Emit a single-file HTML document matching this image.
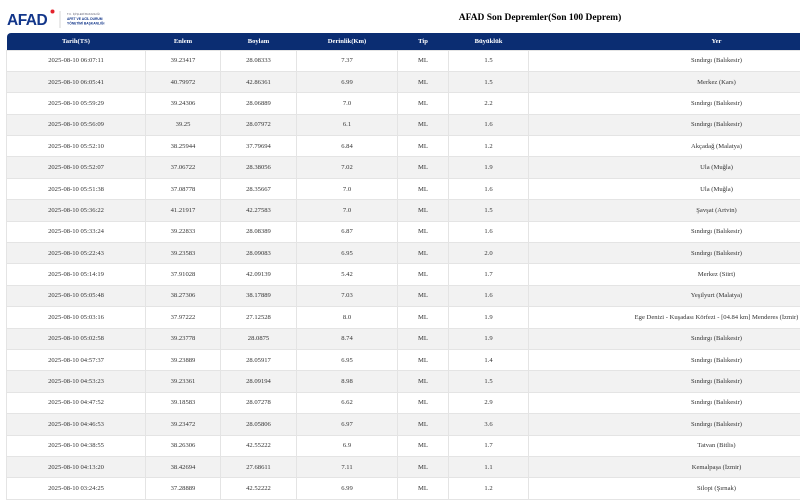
<!DOCTYPE html>
<html><head><meta charset="utf-8"><style>
html,body{margin:0;padding:0;width:800px;height:498px;overflow:hidden;background:#fff;font-family:"Liberation Serif",serif;}
.logo{position:absolute;left:7px;top:8px;}
.title{position:absolute;left:440px;width:200px;top:13px;text-align:center;font-weight:bold;font-size:9.5px;color:#000;}
table{position:absolute;left:6px;top:33px;width:898px;border-collapse:collapse;table-layout:fixed;font-size:6.6px;color:#333;}
th{background:#0b2d72;color:#fff;font-weight:bold;height:16.5px;padding:0;text-align:center;}
thead tr th:first-child{border-top-left-radius:4px;}
td{height:21.4px;padding:0;text-align:center;border:1px solid #e4e4e4;box-sizing:border-box;}
tbody tr:nth-child(even){background:#f2f2f2;}
</style></head><body>
<div class="logo">
<svg width="110" height="22" viewBox="0 0 110 22">
<text x="0" y="17" font-family="Liberation Sans" font-weight="bold" font-size="15.5" fill="#12368a" letter-spacing="-0.5">AFAD</text>
<circle cx="45.5" cy="3.5" r="2" fill="#e3222c"/>
<line x1="53" y1="3" x2="53" y2="20" stroke="#bbb" stroke-width="0.6"/>
<text x="60" y="7" font-family="Liberation Sans" font-size="2.8" fill="#667">T.C. İÇİŞLERİ BAKANLIĞI</text>
<text x="60" y="12" font-family="Liberation Sans" font-weight="bold" font-size="3.3" fill="#12368a">AFET VE ACİL DURUM</text>
<text x="60" y="16.5" font-family="Liberation Sans" font-weight="bold" font-size="3.3" fill="#12368a">YÖNETİMİ BAŞKANLIĞI</text>
</svg></div>
<div class="title">AFAD Son Depremler(Son 100 Deprem)</div>
<table>
<colgroup><col style="width:139px"><col style="width:75px"><col style="width:76px"><col style="width:101px"><col style="width:51px"><col style="width:80px"><col style="width:376px"></colgroup>
<thead><tr><th>Tarih(TS)</th><th>Enlem</th><th>Boylam</th><th>Derinlik(Km)</th><th>Tip</th><th>Büyüklük</th><th>Yer</th></tr></thead>
<tbody>
<tr><td>2025-08-10 06:07:11</td><td>39.23417</td><td>28.08333</td><td>7.37</td><td>ML</td><td>1.5</td><td>Sındırgı (Balıkesir)</td></tr>
<tr><td>2025-08-10 06:05:41</td><td>40.79972</td><td>42.86361</td><td>6.99</td><td>ML</td><td>1.5</td><td>Merkez (Kars)</td></tr>
<tr><td>2025-08-10 05:59:29</td><td>39.24306</td><td>28.06889</td><td>7.0</td><td>ML</td><td>2.2</td><td>Sındırgı (Balıkesir)</td></tr>
<tr><td>2025-08-10 05:56:09</td><td>39.25</td><td>28.07972</td><td>6.1</td><td>ML</td><td>1.6</td><td>Sındırgı (Balıkesir)</td></tr>
<tr><td>2025-08-10 05:52:10</td><td>38.25944</td><td>37.79694</td><td>6.84</td><td>ML</td><td>1.2</td><td>Akçadağ (Malatya)</td></tr>
<tr><td>2025-08-10 05:52:07</td><td>37.06722</td><td>28.38056</td><td>7.02</td><td>ML</td><td>1.9</td><td>Ula (Muğla)</td></tr>
<tr><td>2025-08-10 05:51:38</td><td>37.08778</td><td>28.35667</td><td>7.0</td><td>ML</td><td>1.6</td><td>Ula (Muğla)</td></tr>
<tr><td>2025-08-10 05:36:22</td><td>41.21917</td><td>42.27583</td><td>7.0</td><td>ML</td><td>1.5</td><td>Şavşat (Artvin)</td></tr>
<tr><td>2025-08-10 05:33:24</td><td>39.22833</td><td>28.08389</td><td>6.87</td><td>ML</td><td>1.6</td><td>Sındırgı (Balıkesir)</td></tr>
<tr><td>2025-08-10 05:22:43</td><td>39.23583</td><td>28.09083</td><td>6.95</td><td>ML</td><td>2.0</td><td>Sındırgı (Balıkesir)</td></tr>
<tr><td>2025-08-10 05:14:19</td><td>37.91028</td><td>42.09139</td><td>5.42</td><td>ML</td><td>1.7</td><td>Merkez (Siirt)</td></tr>
<tr><td>2025-08-10 05:05:48</td><td>38.27306</td><td>38.17889</td><td>7.03</td><td>ML</td><td>1.6</td><td>Yeşilyurt (Malatya)</td></tr>
<tr><td>2025-08-10 05:03:16</td><td>37.97222</td><td>27.12528</td><td>8.0</td><td>ML</td><td>1.9</td><td>Ege Denizi - Kuşadası Körfezi - [04.84 km] Menderes (İzmir)</td></tr>
<tr><td>2025-08-10 05:02:58</td><td>39.23778</td><td>28.0875</td><td>8.74</td><td>ML</td><td>1.9</td><td>Sındırgı (Balıkesir)</td></tr>
<tr><td>2025-08-10 04:57:37</td><td>39.23889</td><td>28.05917</td><td>6.95</td><td>ML</td><td>1.4</td><td>Sındırgı (Balıkesir)</td></tr>
<tr><td>2025-08-10 04:53:23</td><td>39.23361</td><td>28.09194</td><td>8.98</td><td>ML</td><td>1.5</td><td>Sındırgı (Balıkesir)</td></tr>
<tr><td>2025-08-10 04:47:52</td><td>39.18583</td><td>28.07278</td><td>6.62</td><td>ML</td><td>2.9</td><td>Sındırgı (Balıkesir)</td></tr>
<tr><td>2025-08-10 04:46:53</td><td>39.23472</td><td>28.05806</td><td>6.97</td><td>ML</td><td>3.6</td><td>Sındırgı (Balıkesir)</td></tr>
<tr><td>2025-08-10 04:38:55</td><td>38.26306</td><td>42.55222</td><td>6.9</td><td>ML</td><td>1.7</td><td>Tatvan (Bitlis)</td></tr>
<tr><td>2025-08-10 04:13:20</td><td>38.42694</td><td>27.68611</td><td>7.11</td><td>ML</td><td>1.1</td><td>Kemalpaşa (İzmir)</td></tr>
<tr><td>2025-08-10 03:24:25</td><td>37.28889</td><td>42.52222</td><td>6.99</td><td>ML</td><td>1.2</td><td>Silopi (Şırnak)</td></tr>
</tbody></table>
</body></html>
